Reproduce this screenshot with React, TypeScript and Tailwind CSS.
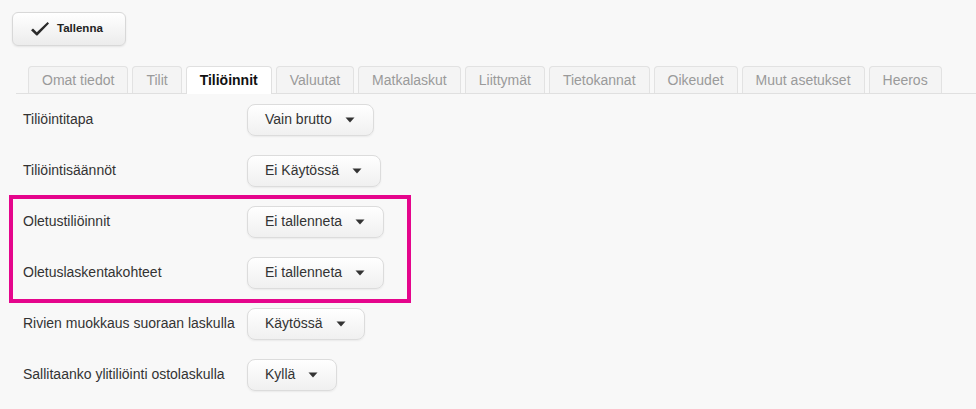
import React from "react";

const tabs = [
  "Omat tiedot",
  "Tilit",
  "Tiliöinnit",
  "Valuutat",
  "Matkalaskut",
  "Liittymät",
  "Tietokannat",
  "Oikeudet",
  "Muut asetukset",
  "Heeros",
];

function Caret() {
  return (
    <svg width="10" height="6" viewBox="0 0 10 6" className="shrink-0">
      <path d="M0.5 0.5 L9.5 0.5 L5 5.5 Z" fill="#333" />
    </svg>
  );
}

function Select({ value }: { value: string }) {
  return (
    <button className="flex h-[32px] items-center gap-[13px] rounded-[8px] border border-[#dcdcdc] bg-gradient-to-b from-white to-[#f0f0f0] pl-[17px] pr-[18px] text-[14px] text-[#333] shadow-[0_1px_2px_rgba(0,0,0,0.06)]">
      <span>{value}</span>
      <Caret />
    </button>
  );
}

function Row({ label, value }: { label: string; value: string }) {
  return (
    <div className="flex h-[51px] items-center pl-[23px]">
      <div className="w-[224px] shrink-0 text-[14px] text-[#333]">{label}</div>
      <Select value={value} />
    </div>
  );
}

export default function App() {
  return (
    <div
      className="h-[409px] w-[976px] overflow-hidden bg-[#f8f8f8]"
      style={{ fontFamily: '"Liberation Sans", Arial, sans-serif' }}
    >
      <div className="pl-[12px] pt-[12px]">
        <button className="flex h-[34px] w-[114px] items-center gap-[7px] rounded-[6px] border border-[#d8d8d8] bg-gradient-to-b from-white to-[#ececec] pl-[17px] shadow-[0_1px_2px_rgba(0,0,0,0.08)]">
          <svg width="20" height="16" viewBox="0 0 20 16">
            <path
              d="M1 9.2 L3 7.6 L6.8 11.2 L17.6 1 L19 2.4 L7.4 14.6 L6.4 14.6 Z"
              fill="#2a2a2a"
            />
          </svg>
          <span className="text-[11.5px] font-bold text-[#222]">Tallenna</span>
        </button>
      </div>

      <div className="ml-[16px] mt-[20px] flex h-[28px] items-end gap-[4px] border-b border-[#e0e0e0] pl-[12px]">
        {tabs.map((t) =>
          t === "Tiliöinnit" ? (
            <div
              key={t}
              className="relative -mb-px flex h-[28px] items-center rounded-t-[4px] border border-b-0 border-[#e0e0e0] bg-white px-[13px] text-[14px] font-bold text-[#111]"
            >
              {t}
            </div>
          ) : (
            <div
              key={t}
              className="flex h-[27px] items-center rounded-t-[4px] border border-b-0 border-[#e2e2e2] bg-[#f4f4f4] px-[13px] text-[14px] text-[#9a9a9a]"
            >
              {t}
            </div>
          )
        )}
      </div>

      <div className="flex flex-col">
        <Row label="Tiliöintitapa" value="Vain brutto" />
        <Row label="Tiliöintisäännöt" value="Ei Käytössä" />
        <div className="relative">
          <Row label="Oletustiliöinnit" value="Ei tallenneta" />
          <Row label="Oletuslaskentakohteet" value="Ei tallenneta" />
          <div className="pointer-events-none absolute left-[9px] top-[-1px] h-[108px] w-[402px] border-4 border-[#e5058c]" />
        </div>
        <Row label="Rivien muokkaus suoraan laskulla" value="Käytössä" />
        <Row label="Sallitaanko ylitiliöinti ostolaskulla" value="Kyllä" />
      </div>
    </div>
  );
}
